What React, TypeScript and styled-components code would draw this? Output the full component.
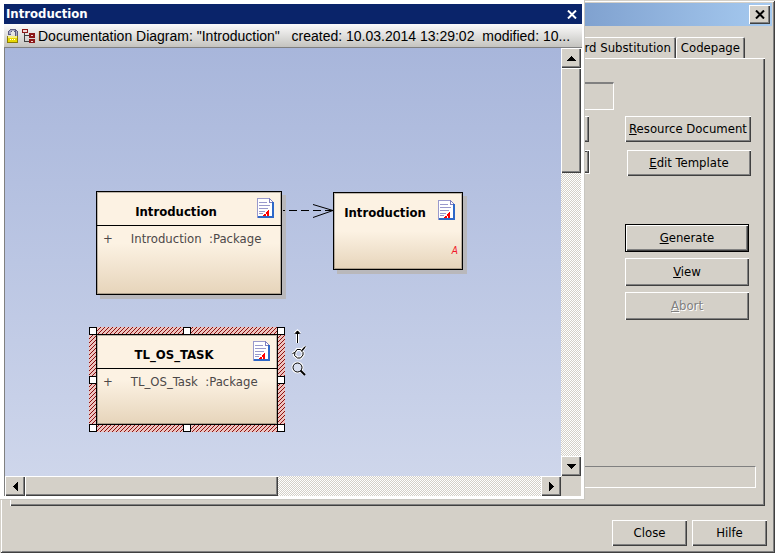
import React from "react";
import styled, { createGlobalStyle, css } from "styled-components";

const face = "#d4d0c8";
const shade = "#808080";
const dark = "#404040";
const uiFont = `"DejaVu Sans Condensed", "DejaVu Sans", sans-serif`;

const GlobalStyle = createGlobalStyle`
  *, *::before, *::after { box-sizing: border-box; }
  body { margin: 0; background: ${face}; overflow: hidden; font: 13px/16px ${uiFont}; color: #000; }
  button { font: inherit; color: inherit; padding: 0; border: 0; border-radius: 0; }
  h1, h2, p { margin: 0; font: inherit; }
`;

const raised = css`
  background: ${face};
  box-shadow: inset 1px 1px #fff, inset -1px -1px ${dark}, inset -2px -2px ${shade};
`;

const Dialog = styled.main`
  position: relative;
  display: flex;
  flex-direction: column;
  height: 100vh;
  padding: 3px;
  background: ${face};
  box-shadow: inset 1px 1px ${face}, inset -1px -1px ${dark}, inset 2px 2px #fff, inset -2px -2px ${shade};
`;

const DialogTitle = styled.header`
  display: flex;
  flex: none;
  align-items: center;
  justify-content: flex-end;
  height: 23px;
  padding-right: 2px;
  background: linear-gradient(90deg, #0a246a, #a6caf0);
`;

const DialogClose = styled.button`
  ${raised}
  display: grid;
  place-items: center;
  width: 21px;
  height: 19px;
`;

const TabList = styled.div`
  display: flex;
  flex: none;
  justify-content: flex-end;
  margin: 11px 27px 0 7px;
`;

const Tab = styled.button`
  height: 21px;
  padding: 0 5px;
  border-radius: 2px 2px 0 0;
  background: ${face};
  box-shadow: inset 1px 1px #fff, inset -1px 0 ${dark}, inset -2px 0 ${shade};
`;

const Panel = styled.section`
  display: flex;
  flex: 1;
  flex-direction: column;
  justify-content: space-between;
  margin: 0 7px;
  padding: 24px 9px 18px;
  ${raised}
`;

const Form = styled.div`
  display: grid;
  grid-template-columns: 1fr 126px;
  column-gap: 35px;
  padding-right: 5px;
`;

const Fields = styled.div`
  display: flex;
  flex-direction: column;
  align-items: flex-end;
`;

const GroupField = styled.div`
  align-self: stretch;
  height: 28px;
  margin: 0 -24px 6px 0;
  border: 1px solid #fff;
  border-top: 2px solid ${shade};
  border-left-color: ${shade};
`;

const Browse = styled.button`
  ${raised}
  width: 80px;
  height: 26px;
  margin: 0 1px 8px 0;
`;

const TemplateSelect = styled.select`
  width: 200px;
  height: 24px;
  appearance: none;
  border: 1px solid #fff;
  border-radius: 0;
  background: ${face};
  box-shadow: inset -1px -1px ${dark}, inset -2px -2px ${shade}, inset 0 1px ${dark};
`;

const Commands = styled.div`
  display: flex;
  flex-direction: column;
  gap: 48px;
  padding-top: 34px;
`;

const CommandGroup = styled.div<{ $gap: number }>`
  display: flex;
  flex-direction: column;
  align-items: flex-start;
  gap: ${(p) => p.$gap}px;
`;

const CommandButton = styled.button<{ $width: number; $tall?: boolean; $default?: boolean; $right?: boolean }>`
  ${raised}
  width: ${(p) => p.$width}px;
  height: ${(p) => (p.$tall ? 28 : 26)}px;
  align-self: ${(p) => (p.$right ? "flex-end" : "flex-start")};
  border: ${(p) => (p.$default ? "1px solid #000" : "0")};

  &:disabled {
    color: ${shade};
    text-shadow: 1px 1px #fff;
  }
`;

const Status = styled.div`
  height: 22px;
  border: 1px solid #fff;
  border-top-color: ${shade};
  border-left-color: ${shade};
`;

const Footer = styled.footer`
  display: flex;
  flex: none;
  justify-content: flex-end;
  gap: 5px;
  padding: 14px 5px 4px;
`;

const Preview = styled.section`
  position: absolute;
  top: 0;
  left: 0;
  display: flex;
  flex-direction: column;
  width: calc(100% - 190px);
  height: calc(100% - 53px);
  padding: 4px 3px 4px 4px;
  background: #fff;
  box-shadow: inset -1px -1px #c8c6c0;
`;

const PreviewTitle = styled.header`
  display: flex;
  flex: none;
  align-items: center;
  justify-content: space-between;
  height: 20px;
  padding: 0 4px 0 2px;
  background: #0a246a;
  color: #fff;
  font-weight: bold;
`;

const PreviewClose = styled.button`
  display: grid;
  place-items: center;
  width: 12px;
  height: 16px;
  background: none;
`;

const InfoBar = styled.div`
  display: flex;
  flex: none;
  align-items: center;
  gap: 3px;
  height: 24px;
  padding-left: 3px;
  border-bottom: 1px solid ${shade};
  background: linear-gradient(#fcfcfc, #c4c3bf);
  font: 14px/18px "Liberation Sans", Arial, sans-serif;

  svg { flex: none; }
`;

const InfoText = styled.p`
  overflow: hidden;
  white-space: pre;
`;

const Viewport = styled.div`
  display: grid;
  flex: 1;
  grid-template-columns: 1fr 20px;
  grid-template-rows: 1fr 20px;
  border-left: 1px solid ${shade};
  border-right: 1px solid #fff;
  background: ${face};
`;

const Canvas = styled.div`
  position: relative;
  overflow: hidden;
  background: linear-gradient(#a8b6db, #ced6eb);
`;

const Scrollbar = styled.div<{ $vertical?: boolean }>`
  display: flex;
  flex-direction: ${(p) => (p.$vertical ? "column" : "row")};
  background: repeating-conic-gradient(#fff 0 25%, ${face} 0 50%) 0 0 / 2px 2px;
`;

const ScrollArrow = styled.button`
  ${raised}
  display: grid;
  flex: none;
  place-items: center;
  width: 20px;
  height: 20px;
`;

const Track = styled.div<{ $vertical?: boolean }>`
  display: flex;
  flex: 1;
  flex-direction: ${(p) => (p.$vertical ? "column" : "row")};
`;

const Thumb = styled.div<{ $size: string }>`
  ${raised}
  flex: 0 0 ${(p) => p.$size};
`;

const Node = styled.article<{ $x: number; $y: number; $w: number; $h: number; $flat?: boolean }>`
  position: absolute;
  left: ${(p) => p.$x}px;
  top: ${(p) => p.$y}px;
  display: flex;
  flex-direction: column;
  width: ${(p) => p.$w}px;
  height: ${(p) => p.$h}px;
  border: 1px solid #000;
  outline: 1px solid rgba(0, 0, 0, 0.25);
  outline-offset: -2px;
  background: linear-gradient(#fcf2e3 50%, #e6d4ba);
  box-shadow: ${(p) => (p.$flat ? "none" : "4px 4px #b9b8bb")};
`;

const NodeHeader = styled.header<{ $ruled?: boolean }>`
  display: flex;
  flex: none;
  align-items: center;
  justify-content: flex-end;
  gap: 10px;
  height: 34px;
  padding: 6px 6px 0 8px;
  border-bottom: ${(p) => (p.$ruled ? "1px solid #000" : "0")};

  svg { flex: none; margin-bottom: 6px; }
`;

const NodeName = styled.h2`
  flex: 1;
  text-align: center;
  font-weight: bold;
  white-space: nowrap;
`;

const Attribute = styled.p`
  display: flex;
  gap: 18px;
  padding: 5px 6px;
  color: #4c4848;
  white-space: pre;
`;

const Mark = styled.em`
  margin: auto 4px 10px auto;
  color: #f01828;
  font-size: 10px;
`;

const Selection = styled.div`
  position: absolute;
  left: 84px;
  top: 279px;
  width: 196px;
  height: 105px;
`;

const Handles = styled.div`
  position: absolute;
  inset: 0;
  display: grid;
  grid-template-columns: repeat(3, 8px);
  grid-template-rows: repeat(3, 8px);
  place-content: space-between;
`;

const Handle = styled.span<{ $hidden?: boolean }>`
  border: 1px solid #000;
  background: #fff;
  visibility: ${(p) => (p.$hidden ? "hidden" : "visible")};
`;

const Connector = styled.svg`
  position: absolute;
  left: 278px;
  top: 152px;
`;

const QuickTools = styled.div`
  position: absolute;
  left: 286px;
  top: 280px;
`;

const Cross = ({ color }: { color: string }) => (
  <svg width="10" height="9" viewBox="0 0 10 9" stroke={color} strokeWidth="2">
    <path d="M1 .5 9 8.5M9 .5 1 8.5" />
  </svg>
);

const arrows = { up: "M4.5 0 9 5H0z", down: "M0 0H9L4.5 5z", left: "M5 0V9L0 4.5z", right: "M0 0V9L5 4.5z" };
const Arrow = ({ dir }: { dir: keyof typeof arrows }) => {
  const wide = dir === "up" || dir === "down";
  return (
    <svg width={wide ? 9 : 5} height={wide ? 5 : 9} shapeRendering="crispEdges">
      <path d={arrows[dir]} />
    </svg>
  );
};

const Hatch = () => (
  <svg width="100%" height="100%" display="block" shapeRendering="crispEdges">
    <pattern id="hatch" width="4" height="4" patternUnits="userSpaceOnUse">
      <path d="M0 0h4v4H0z" fill="#ecc4c0" />
      <path d="M3 0h1v1H3zM2 1h1v1H2zM1 2h1v1H1zM0 3h1v1H0z" fill="#8c1010" />
    </pattern>
    <rect width="100%" height="100%" fill="url(#hatch)" />
  </svg>
);

const LockIcon = () => (
  <svg width="12" height="16" viewBox="0 0 12 16" shapeRendering="crispEdges">
    <path d="M3 1h6v1h1v1h1v6H8V4H7V3H5v1H4v3H1V3h1V2h1z" fill="#5c5c80" />
    <path d="M3 2h5v1H3zM2 3h2v3H2zM9 3h1v5H9z" fill="#a8a8c4" />
    <path d="M1 8h10v7H1z" fill="#e8d800" />
    <path d="M1 8h10v2H1z" fill="#f8f080" />
    <path d="M3 11h1v1H3zM5 11h1v1H5zM7 11h1v1H7z" fill="#fff" />
    <path d="M1 14h10v1H1zM10 8h1v7h-1zM0 8h1v7H0z" fill="#8a7c08" />
  </svg>
);

const TreeIcon = () => (
  <svg width="13" height="14" viewBox="0 0 13 14" shapeRendering="crispEdges">
    <path d="M2.5 4v8.500H8M2.500 6.500H8" fill="none" stroke="#404040" />
    <path d="M0 0h6v4H0zM7 4h6v5H7zM7 10h6v4H7z" fill="#8c1818" />
    <path d="M1 1h4v2H1zM9 6h2v1H9zM9 12h2v1H9z" fill="#f0d8d8" />
  </svg>
);

const DocIcon = () => (
  <svg width="18" height="21" viewBox="0 0 18 21" shapeRendering="crispEdges">
    <path d="M1 1h11l4 4v14H1z" fill="#fff" />
    <path d="M.5 20V.5H12" fill="none" stroke="#9999cc" />
    <path d="M12.500 0v4.500H16M12 0l4 4" fill="none" stroke="#8080c0" />
    <path d="M16 4v15H1" fill="none" stroke="#2e68c8" strokeWidth="2" />
    <path d="M2 4.500h8M2 7.500h11M2 10.500h9M2 13.500h6M2 15.500h4" stroke="#9999cc" />
    <path d="M12 12v6h-2v-2H9v2H6v-1h1v-1h2v-2h1v-1h1v-1z" fill="#f00" />
  </svg>
);

const toolShapes = "M6.500 15V3M4 5.500 6.500 3 9 5.500M1.500 25.500 4 24.500l2-3h3.500l1 1 4-4M4 24.500l-.5 3 3 2.500h3l2.500-3v-2.500l-2-2";

const ToolIcons = () => (
  <svg width="18" height="52" viewBox="0 0 18 52" fill="none">
    <g stroke="#fff" strokeWidth="3">
      <path d={toolShapes} />
      <path d="m9.500 42.500 4 4" />
      <circle cx="6.500" cy="39.500" r="4.500" />
    </g>
    <path d={toolShapes} stroke="#000" />
    <path d="M4 6h5L6.500 2.500zM10.500 22l3-3.500 1 1-3 3.500z" fill="#000" />
    <circle cx="6.500" cy="39.500" r="4.500" fill="#d8dff0" stroke="#000" />
    <path d="m9.500 42.500 4.500 4.500" stroke="#000" strokeWidth="2" />
  </svg>
);

export default function App() {
  return (
    <>
      <GlobalStyle />
      <Dialog>
        <DialogTitle>
          <DialogClose aria-label="Close dialog"><Cross color="#000" /></DialogClose>
        </DialogTitle>
        <TabList role="tablist">
          <Tab role="tab">Word Substitution</Tab>
          <Tab role="tab">Codepage</Tab>
        </TabList>
        <Panel>
          <Form>
            <Fields>
              <GroupField />
              <Browse aria-label="Browse" />
              <TemplateSelect aria-label="Template" />
            </Fields>
            <Commands>
              <CommandGroup $gap={8}>
                <CommandButton $width={126}><u>R</u>esource Document</CommandButton>
                <CommandButton $width={124} $right><u>E</u>dit Template</CommandButton>
              </CommandGroup>
              <CommandGroup $gap={6}>
                <CommandButton $width={124} $tall $default><u>G</u>enerate</CommandButton>
                <CommandButton $width={124} $tall><u>V</u>iew</CommandButton>
                <CommandButton $width={124} $tall disabled><u>A</u>bort</CommandButton>
              </CommandGroup>
            </Commands>
          </Form>
          <Status />
        </Panel>
        <Footer>
          <CommandButton $width={75}>Close</CommandButton>
          <CommandButton $width={75}>Hilfe</CommandButton>
        </Footer>

        <Preview>
          <PreviewTitle>
            <h1>Introduction</h1>
            <PreviewClose aria-label="Close preview"><Cross color="#fff" /></PreviewClose>
          </PreviewTitle>
          <InfoBar>
            <LockIcon />
            <TreeIcon />
            <InfoText>{'Documentation Diagram: "Introduction"   created: 10.03.2014 13:29:02  modified: 10...'}</InfoText>
          </InfoBar>
          <Viewport>
            <Canvas>
              <Node $x={91} $y={143} $w={186} $h={104}>
                <NodeHeader $ruled><NodeName>Introduction</NodeName><DocIcon /></NodeHeader>
                <Attribute><span>+</span><span>Introduction  :Package</span></Attribute>
              </Node>
              <Node $x={328} $y={144} $w={130} $h={78}>
                <NodeHeader><NodeName>Introduction</NodeName><DocIcon /></NodeHeader>
                <Mark>A</Mark>
              </Node>
              <Connector width="50" height="20" viewBox="0 0 50 20" fill="none" stroke="#000">
                <path d="M0 10.500h50" strokeDasharray="8 4" strokeDashoffset="6" />
                <path d="m30 4.500 20 6-20 7" />
              </Connector>
              <Selection>
                <Hatch />
                <Node $x={7} $y={7} $w={182} $h={91} $flat>
                  <NodeHeader $ruled><NodeName>TL_OS_TASK</NodeName><DocIcon /></NodeHeader>
                  <Attribute><span>+</span><span>TL_OS_Task  :Package</span></Attribute>
                </Node>
                <Handles>
                  {Array.from({ length: 9 }, (_, i) => <Handle key={i} $hidden={i === 4} />)}
                </Handles>
              </Selection>
              <QuickTools><ToolIcons /></QuickTools>
            </Canvas>
            <Scrollbar $vertical>
              <ScrollArrow aria-label="Scroll up"><Arrow dir="up" /></ScrollArrow>
              <Track $vertical><Thumb $size="27%" /></Track>
              <ScrollArrow aria-label="Scroll down"><Arrow dir="down" /></ScrollArrow>
            </Scrollbar>
            <Scrollbar>
              <ScrollArrow aria-label="Scroll left"><Arrow dir="left" /></ScrollArrow>
              <Track><Thumb $size="49%" /></Track>
              <ScrollArrow aria-label="Scroll right"><Arrow dir="right" /></ScrollArrow>
            </Scrollbar>
          </Viewport>
        </Preview>
      </Dialog>
    </>
  );
}
